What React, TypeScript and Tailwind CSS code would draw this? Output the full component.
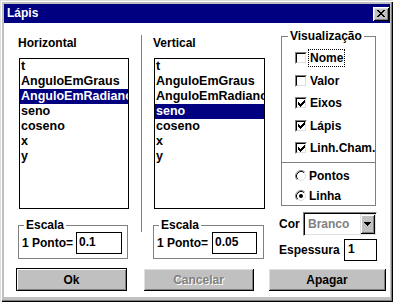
import React from "react";

const hItems = ["t", "AnguloEmGraus", "AnguloEmRadianos", "seno", "coseno", "x", "y"];

function ListBox({ selected, w }: { selected: string; w: string }) {
  return (
    <div className={`${w} h-[151px] border border-black bg-white overflow-hidden text-[12.5px]`}>
      {hItems.map((it) => (
        <div
          key={it}
          className={
            it === selected
              ? "h-[15px] leading-[15px] pl-[1px] whitespace-nowrap bg-[#000080] text-white"
              : "h-[15px] leading-[15px] pl-[1px] whitespace-nowrap"
          }
        >
          {it}
        </div>
      ))}
    </div>
  );
}

function Escala({ value, cls, labelW, inputW }: { value: string; cls: string; labelW: string; inputW: string }) {
  return (
    <fieldset className={`${cls} border border-[#808080] p-0 m-0 min-w-0`}>
      <legend className="ml-[5px] px-[2px] leading-[14px] h-[14px]">Escala</legend>
      <div className="flex items-center h-[22px] pl-[3px] mb-[4px]">
        <span className={`${labelW} leading-[15px] whitespace-nowrap`}>1 Ponto=</span>
        <div className={`${inputW} h-[22px] border border-black bg-white pl-[2px] leading-[18px]`}>{value}</div>
      </div>
    </fieldset>
  );
}

function CheckMark() {
  const px: [number, number][] = [
    [6, 0],
    [5, 1], [6, 1],
    [0, 2], [4, 2], [5, 2], [6, 2],
    [0, 3], [1, 3], [3, 3], [4, 3], [5, 3],
    [0, 4], [1, 4], [2, 4], [3, 4], [4, 4],
    [1, 5], [2, 5], [3, 5],
    [2, 6],
  ];
  return (
    <svg width="7" height="7" viewBox="0 0 7 7" shapeRendering="crispEdges">
      {px.map(([x, y], i) => (
        <rect key={i} x={x} y={y} width="1" height="1" fill="#000" />
      ))}
    </svg>
  );
}

function CheckBox({ checked, label, focus, h }: { checked: boolean; label: string; focus?: boolean; h: string }) {
  return (
    <div className={`flex items-center ${h} pl-[13px]`}>
      <span className="w-[12px] h-[12px] border border-t-[#808080] border-l-[#808080] border-r-white border-b-white shrink-0">
        <span className="w-full h-full border border-t-black border-l-black border-r-[#dfdfdf] border-b-[#dfdfdf] bg-white flex items-center justify-center">
          {checked ? <CheckMark /> : null}
        </span>
      </span>
      <span
        className={
          focus
            ? "ml-[1px] px-[1px] leading-[16px] border border-dotted border-black whitespace-nowrap"
            : "ml-[1px] px-[1px] leading-[16px] border border-transparent whitespace-nowrap"
        }
      >
        {label}
      </span>
    </div>
  );
}

function Radio({ checked, label, h }: { checked: boolean; label: string; h: string }) {
  return (
    <div className={`flex items-center ${h} pl-[13px]`}>
      <svg width="12" height="12" viewBox="0 0 12 12" className="shrink-0">
        <circle cx="6" cy="6" r="5" fill="#fff" />
        <path d="M2.11 9.89 A5.5 5.5 0 0 1 9.89 2.11" stroke="#808080" strokeWidth="1" fill="none" />
        <path d="M9.89 2.11 A5.5 5.5 0 0 1 2.11 9.89" stroke="#ffffff" strokeWidth="1" fill="none" />
        <path d="M2.82 9.18 A4.5 4.5 0 0 1 9.18 2.82" stroke="#000" strokeWidth="1" fill="none" />
        <path d="M9.18 2.82 A4.5 4.5 0 0 1 2.82 9.18" stroke="#dfdfdf" strokeWidth="1" fill="none" />
        {checked ? <circle cx="6" cy="6" r="2" fill="#000" /> : null}
      </svg>
      <span className="ml-[2px] leading-[16px] whitespace-nowrap">{label}</span>
    </div>
  );
}

function CloseGlyph() {
  const rows = ["11000011", "01100110", "00111100", "00011000", "00111100", "01100110", "11000011"];
  return (
    <svg width="8" height="7" viewBox="0 0 8 7" shapeRendering="crispEdges">
      {rows.flatMap((r, y) =>
        r.split("").map((c, x) => (c === "1" ? <rect key={`${x}-${y}`} x={x} y={y} width="1" height="1" fill="#000" /> : null))
      )}
    </svg>
  );
}

function DownArrow() {
  return (
    <svg width="7" height="4" viewBox="0 0 7 4" shapeRendering="crispEdges">
      <rect x="0" y="0" width="7" height="1" fill="#000" />
      <rect x="1" y="1" width="5" height="1" fill="#000" />
      <rect x="2" y="2" width="3" height="1" fill="#000" />
      <rect x="3" y="3" width="1" height="1" fill="#000" />
    </svg>
  );
}

export default function App() {
  return (
    <div className="w-[393px] h-[302px] bg-[#c0c0c0] pt-[4px] pl-[4px] pr-[3px] pb-[5px] font-['Liberation_Sans',Arial,sans-serif] font-bold text-[12px] text-black shadow-[inset_1px_1px_0_#dfdfdf,inset_2px_2px_0_#ffffff,inset_-1px_-1px_0_#000000,inset_-2px_-2px_0_#808080] overflow-hidden">
      {/* Title bar */}
      <div className="h-[19px] bg-[#000080] flex items-center pl-[3px] pr-[1px]">
        <span className="text-white leading-[15px]">Lápis</span>
        <div className="ml-auto w-[16px] h-[14px] bg-[#c0c0c0] flex items-center justify-center shadow-[inset_1px_1px_0_#fff,inset_-1px_-1px_0_#000,inset_2px_2px_0_#dfdfdf,inset_-2px_-2px_0_#808080]">
          <CloseGlyph />
        </div>
      </div>

      {/* Body */}
      <div className="h-[274px] bg-white flex flex-col pl-[12px]">
        <div className="h-[245px] flex">
          {/* Column 1 */}
          <div className="w-[125px] flex flex-col">
            <div className="mt-[13px] ml-[2px] h-[15px] leading-[15px]">Horizontal</div>
            <div className="mt-[7px] ml-[3px]">
              <ListBox selected="AnguloEmRadianos" w="w-[110px]" />
            </div>
            <Escala value="0.1" cls="mt-[9px] ml-[2px] w-[110px]" labelW="w-[54px]" inputW="w-[46px]" />
          </div>

          {/* Separator */}
          <div className="w-px bg-[#808080] mt-[12px] h-[197px] self-start" />

          {/* Column 2 */}
          <div className="w-[137px] flex flex-col">
            <div className="mt-[13px] ml-[11px] h-[15px] leading-[15px]">Vertical</div>
            <div className="mt-[7px] ml-[12px]">
              <ListBox selected="seno" w="w-[111px]" />
            </div>
            <Escala value="0.05" cls="mt-[9px] ml-[11px] w-[111px]" labelW="w-[55px]" inputW="w-[45px]" />
          </div>

          {/* Column 3 */}
          <div className="flex-1 flex flex-col">
            <fieldset className="mt-[6px] ml-[2px] w-[95px] border border-[#808080] p-0 m-0 min-w-0">
              <legend className="ml-[6px] px-[2px] leading-[14px] h-[14px]">Visualização</legend>
              <div className="pt-[4px]">
                <CheckBox checked={false} label="Nome" focus h="h-[22px]" />
                <CheckBox checked={false} label="Valor" h="h-[23px]" />
                <CheckBox checked label="Eixos" h="h-[22px]" />
                <CheckBox checked label="Lápis" h="h-[23px]" />
                <CheckBox checked label="Linh.Cham." h="h-[22px]" />
              </div>
              <div className="mt-[3px] h-px bg-[#808080]" />
              <div className="pt-[3px]">
                <Radio checked={false} label="Pontos" h="h-[20px]" />
                <Radio checked label="Linha" h="h-[19px]" />
              </div>
            </fieldset>

            <div className="mt-[6px] h-[24px] flex items-center">
              <span className="w-[24px] leading-[15px]">Cor</span>
              <div className="w-[74px] h-[24px] border border-t-[#808080] border-l-[#808080] border-r-white border-b-[#ffffff] shadow-[inset_1px_1px_0_#000,inset_-1px_-1px_0_#dfdfdf] flex items-center p-[1px]">
                <span className="flex-1 pl-[3px] text-[#808080] leading-[15px]">Branco</span>
                <div className="w-[15px] h-[20px] bg-[#c0c0c0] flex items-center justify-center shadow-[inset_1px_1px_0_#dfdfdf,inset_-1px_-1px_0_#000,inset_2px_2px_0_#fff,inset_-2px_-2px_0_#808080]">
                  <DownArrow />
                </div>
              </div>
            </div>

            <div className="mt-[3px] h-[22px] flex items-center">
              <span className="w-[65px] leading-[15px]">Espessura</span>
              <div className="w-[33px] h-[22px] border border-black bg-white pl-[3px] leading-[18px]">1</div>
            </div>
          </div>
        </div>

        {/* Buttons */}
        <div className="mt-[0px] flex">
          <div className="w-[111px] h-[23px] bg-[#c0c0c0] border border-black flex items-center justify-center shadow-[inset_1px_1px_0_#fff,inset_-1px_-1px_0_#808080]">
            Ok
          </div>
          <div className="ml-[16px] w-[111px] h-[23px] bg-[#c0c0c0] flex items-center justify-center text-[#808080] [text-shadow:1px_1px_0_#fff] shadow-[inset_1px_1px_0_#fff,inset_-1px_-1px_0_#000,inset_2px_2px_0_#dfdfdf,inset_-2px_-2px_0_#808080]">
            Cancelar
          </div>
          <div className="ml-[14px] w-[118px] h-[23px] bg-[#c0c0c0] flex items-center justify-center shadow-[inset_1px_1px_0_#fff,inset_-1px_-1px_0_#000,inset_2px_2px_0_#dfdfdf,inset_-2px_-2px_0_#808080]">
            Apagar
          </div>
        </div>
      </div>
    </div>
  );
}
